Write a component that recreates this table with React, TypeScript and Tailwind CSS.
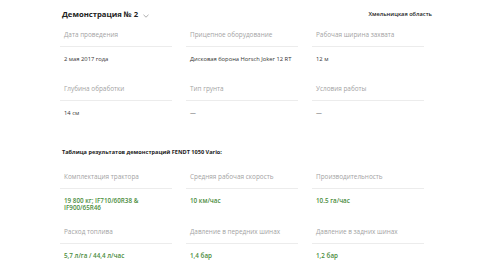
import React from "react";

const top = [
  ["Дата проведения", "2 мая 2017 года"],
  ["Прицепное оборудование", "Дисковая борона Horsch Joker 12 RT"],
  ["Рабочая ширина захвата", "12 м"],
  ["Глубина обработки", "14 см"],
  ["Тип грунта", "—"],
  ["Условия работы", "—"],
];

const bottom = [
  ["Комплектация трактора", "19 800 кг; IF710/60R38 & IF900/65R46"],
  ["Средняя рабочая скорость", "10 км/час"],
  ["Производительность", "10.5 га/час"],
  ["Расход топлива", "5,7 л/га / 44,4 л/час"],
  ["Давление в передних шинах", "1,4 бар"],
  ["Давление в задних шинах", "1,2 бар"],
];

export default function App() {
  return (
    <div
      className="w-[480px] h-[270px] bg-white overflow-hidden"
      style={{ fontFamily: '"Open Sans", "Noto Sans", sans-serif' }}
    >
      <div className="ml-[60px] w-[372px]">
        <div className="h-[24px] pt-[8px] flex items-start justify-between pl-[2px]">
          <div className="flex items-center gap-[5px] h-[14px]">
            <span className="text-[7.7px] font-bold text-[#222] leading-none">Демонстрация № 2</span>
            <svg width="6" height="4" viewBox="0 0 6 4" className="mt-[1px]">
              <path d="M0.5 0.8 L3 3.2 L5.5 0.8" fill="none" stroke="#999" strokeWidth="0.8" />
            </svg>
          </div>
          <span className="text-[5.7px] font-semibold text-[#222] leading-none mt-[4px]">Хмельницкая область</span>
        </div>
        <div className="w-[364px] grid grid-cols-3 gap-x-[14px] gap-y-[7px]">
          {top.map(([l, v]) => (
            <div key={l}>
              <div className="h-[23px] flex items-center px-[4px] border-b border-[#ececec] text-[6.4px] text-[#a3a3a3]">{l}</div>
              <div className="h-[24px] pt-[8px] px-[4px] text-[5.8px] leading-[8px] text-[#333]">{v}</div>
            </div>
          ))}
        </div>
        <div className="h-[41px] pt-[23px] pl-[2px] text-[5.6px] leading-[8px] font-bold text-[#222]">
          Таблица результатов демонстраций FENDT 1050 Vario:
        </div>
        <div className="w-[364px] grid grid-cols-3 gap-x-[14px] gap-y-[8px]">
          {bottom.map(([l, v]) => (
            <div key={l}>
              <div className="h-[23px] flex items-center px-[4px] border-b border-[#ececec] text-[6.4px] text-[#a3a3a3]">{l}</div>
              <div className="h-[24px] pt-[8px] pl-[4px] pr-[20px] text-[6.3px] leading-[7.4px] font-semibold text-[#4a8c3c]">{v}</div>
            </div>
          ))}
        </div>
      </div>
    </div>
  );
}
